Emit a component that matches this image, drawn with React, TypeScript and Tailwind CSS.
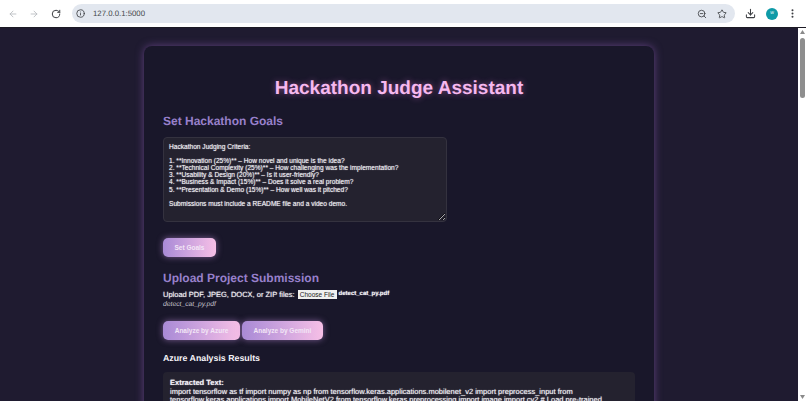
import { ArrowLeft, ArrowRight, RotateCw, Info, ZoomOut, Star, Download, EllipsisVertical } from "lucide-react";

const goals = `Hackathon Judging Criteria:

1. **Innovation (25%)** – How novel and unique is the idea?
2. **Technical Complexity (25%)** – How challenging was the implementation?
3. **Usability & Design (20%)** – Is it user-friendly?
4. **Business & Impact (15%)** – Does it solve a real problem?
5. **Presentation & Demo (15%)** – How well was it pitched?

Submissions must include a README file and a video demo.`;

function GradientButton({ label, width }: { label: string; width: string }) {
  return (
    <button
      className={`${width} h-[19px] rounded-[5px] bg-gradient-to-r from-[#a98ad6] to-[#f6bfe6] text-[6.5px] font-bold text-[#f3e6f6] shadow-[0_0_6px_rgba(200,150,230,0.55)]`}
    >
      {label}
    </button>
  );
}

export default function App() {
  return (
    <div className="h-[401px] w-[806px] overflow-hidden bg-white antialiased [text-rendering:geometricPrecision] [font-family:'Liberation_Sans',Arial,sans-serif]">
      {/* browser toolbar */}
      <div className="flex h-[28px] items-center border-b border-[#1c1a24] bg-white pl-[8px]">
        <ArrowLeft className="h-[10px] w-[10px] text-[#b5b8bd]" />
        <ArrowRight className="ml-[11px] h-[10px] w-[10px] text-[#b5b8bd]" />
        <RotateCw className="ml-[12px] h-[10px] w-[10px] text-[#3f4145]" strokeWidth={2.4} />
        <div className="ml-[11px] flex h-[19px] w-[663px] items-center rounded-full bg-[#e2e7ef] pr-[8px] pl-[1px]">
          <div className="flex h-[14px] w-[14px] items-center justify-center">
            <Info className="h-[9px] w-[9px] text-[#3c3e42]" strokeWidth={2.2} />
          </div>
          <span className="ml-[6px] text-[7.8px] text-[#44474b]">127.0.0.1:5000</span>
          <ZoomOut className="ml-auto h-[10px] w-[10px] text-[#3c3e42]" strokeWidth={2} />
          <Star className="ml-[10px] h-[10px] w-[10px] text-[#3c3e42]" strokeWidth={2} />
        </div>
        <Download className="ml-[10px] h-[11px] w-[11px] text-[#3c3e42]" strokeWidth={2.2} />
        <div className="ml-[10px] flex h-[12px] w-[12px] items-center justify-center rounded-full bg-[#0e9aa7] text-[5px] text-white">
          w
        </div>
        <EllipsisVertical className="ml-[9px] h-[11px] w-[11px] text-[#3c3e42]" strokeWidth={2.4} />
      </div>

      <div className="flex h-[373px]">
        {/* page */}
        <div className="h-full w-[798px] overflow-hidden bg-[#1f1b30] pt-[18px]">
          <div className="ml-[144px] h-[600px] w-[510px] rounded-[8px] bg-[#19172a] px-[19px] pt-[30px] shadow-[0_0_8px_rgba(130,85,170,0.65)]">
            <h1 className="text-center text-[19px] leading-[25px] font-bold text-[#f6b8ee] [text-shadow:0_0_6px_rgba(240,130,230,0.45)]">
              Hackathon Judge Assistant
            </h1>

            <h2 className="mt-[12px] text-[12px] leading-[16px] font-bold text-[#9880cb]">Set Hackathon Goals</h2>

            <textarea
              className="mt-[8px] block h-[85px] w-[284px] rounded-[4px] border border-[#34323f] bg-[#24222f] px-[5px] py-[5px] text-[6.6px] leading-[7.1px] text-[#f0eef4] outline-none [text-shadow:0_0_1px_rgba(240,238,244,0.8)]"
              defaultValue={goals}
            />

            <div className="mt-[16px] flex">
              <GradientButton label="Set Goals" width="w-[53px]" />
            </div>

            <h2 className="mt-[13px] text-[12px] leading-[16px] font-bold text-[#9880cb]">Upload Project Submission</h2>

            <div className="mt-[3px] flex h-[11px] items-center text-[7.5px] text-[#f2f0f5] [text-shadow:0_0_1px_rgba(240,238,244,0.8)]">
              <span>Upload PDF, JPEG, DOCX, or ZIP files:</span>
              <button className="ml-[3px] h-[9px] w-[39px] bg-[#f0f0f0] text-[6.5px] leading-[9px] font-normal text-[#1c1c1c]">
                Choose File
              </button>
              <span className="ml-[2px] text-[6px] font-bold">detect_cat_py.pdf</span>
            </div>

            <p className="text-[6.75px] leading-[10px] text-[#c9c7cf] italic">detect_cat_py.pdf</p>

            <div className="mt-[11px] flex gap-[2px]">
              <GradientButton label="Analyze by Azure" width="w-[77px]" />
              <GradientButton label="Analyze by Gemini" width="w-[81px]" />
            </div>

            <h3 className="mt-[12px] text-[8.8px] leading-[12px] font-bold text-[#f5f3f8]">Azure Analysis Results</h3>

            <div className="mt-[8px] h-[120px] w-[472px] rounded-[4px] bg-[#24222f] px-[7px] py-[7px] text-[7.5px] leading-[8.7px] text-[#f0eef4] [text-shadow:0_0_1px_rgba(240,238,244,0.8)]">
              <p className="font-bold">Extracted Text:</p>
              <p>
                import tensorflow as tf import numpy as np from tensorflow.keras.applications.mobilenet_v2 import preprocess_input from tensorflow.keras.applications import MobileNetV2 from tensorflow.keras.preprocessing import image import cv2 # Load pre-trained
              </p>
            </div>
          </div>
        </div>

        {/* scrollbar */}
        <div className="flex h-full w-[8px] flex-col items-center bg-white">
          <svg className="mt-[2px] h-[4px] w-[5px]" viewBox="0 0 5 4">
            <polygon points="2.5,0 5,4 0,4" fill="#8a8a8a" />
          </svg>
          <div className="mt-[4px] h-[60px] w-[5px] rounded-full bg-[#8e8e8e]" />
          <svg className="mt-auto mb-[2px] h-[4px] w-[5px]" viewBox="0 0 5 4">
            <polygon points="0,0 5,0 2.5,4" fill="#8a8a8a" />
          </svg>
        </div>
      </div>
    </div>
  );
}
